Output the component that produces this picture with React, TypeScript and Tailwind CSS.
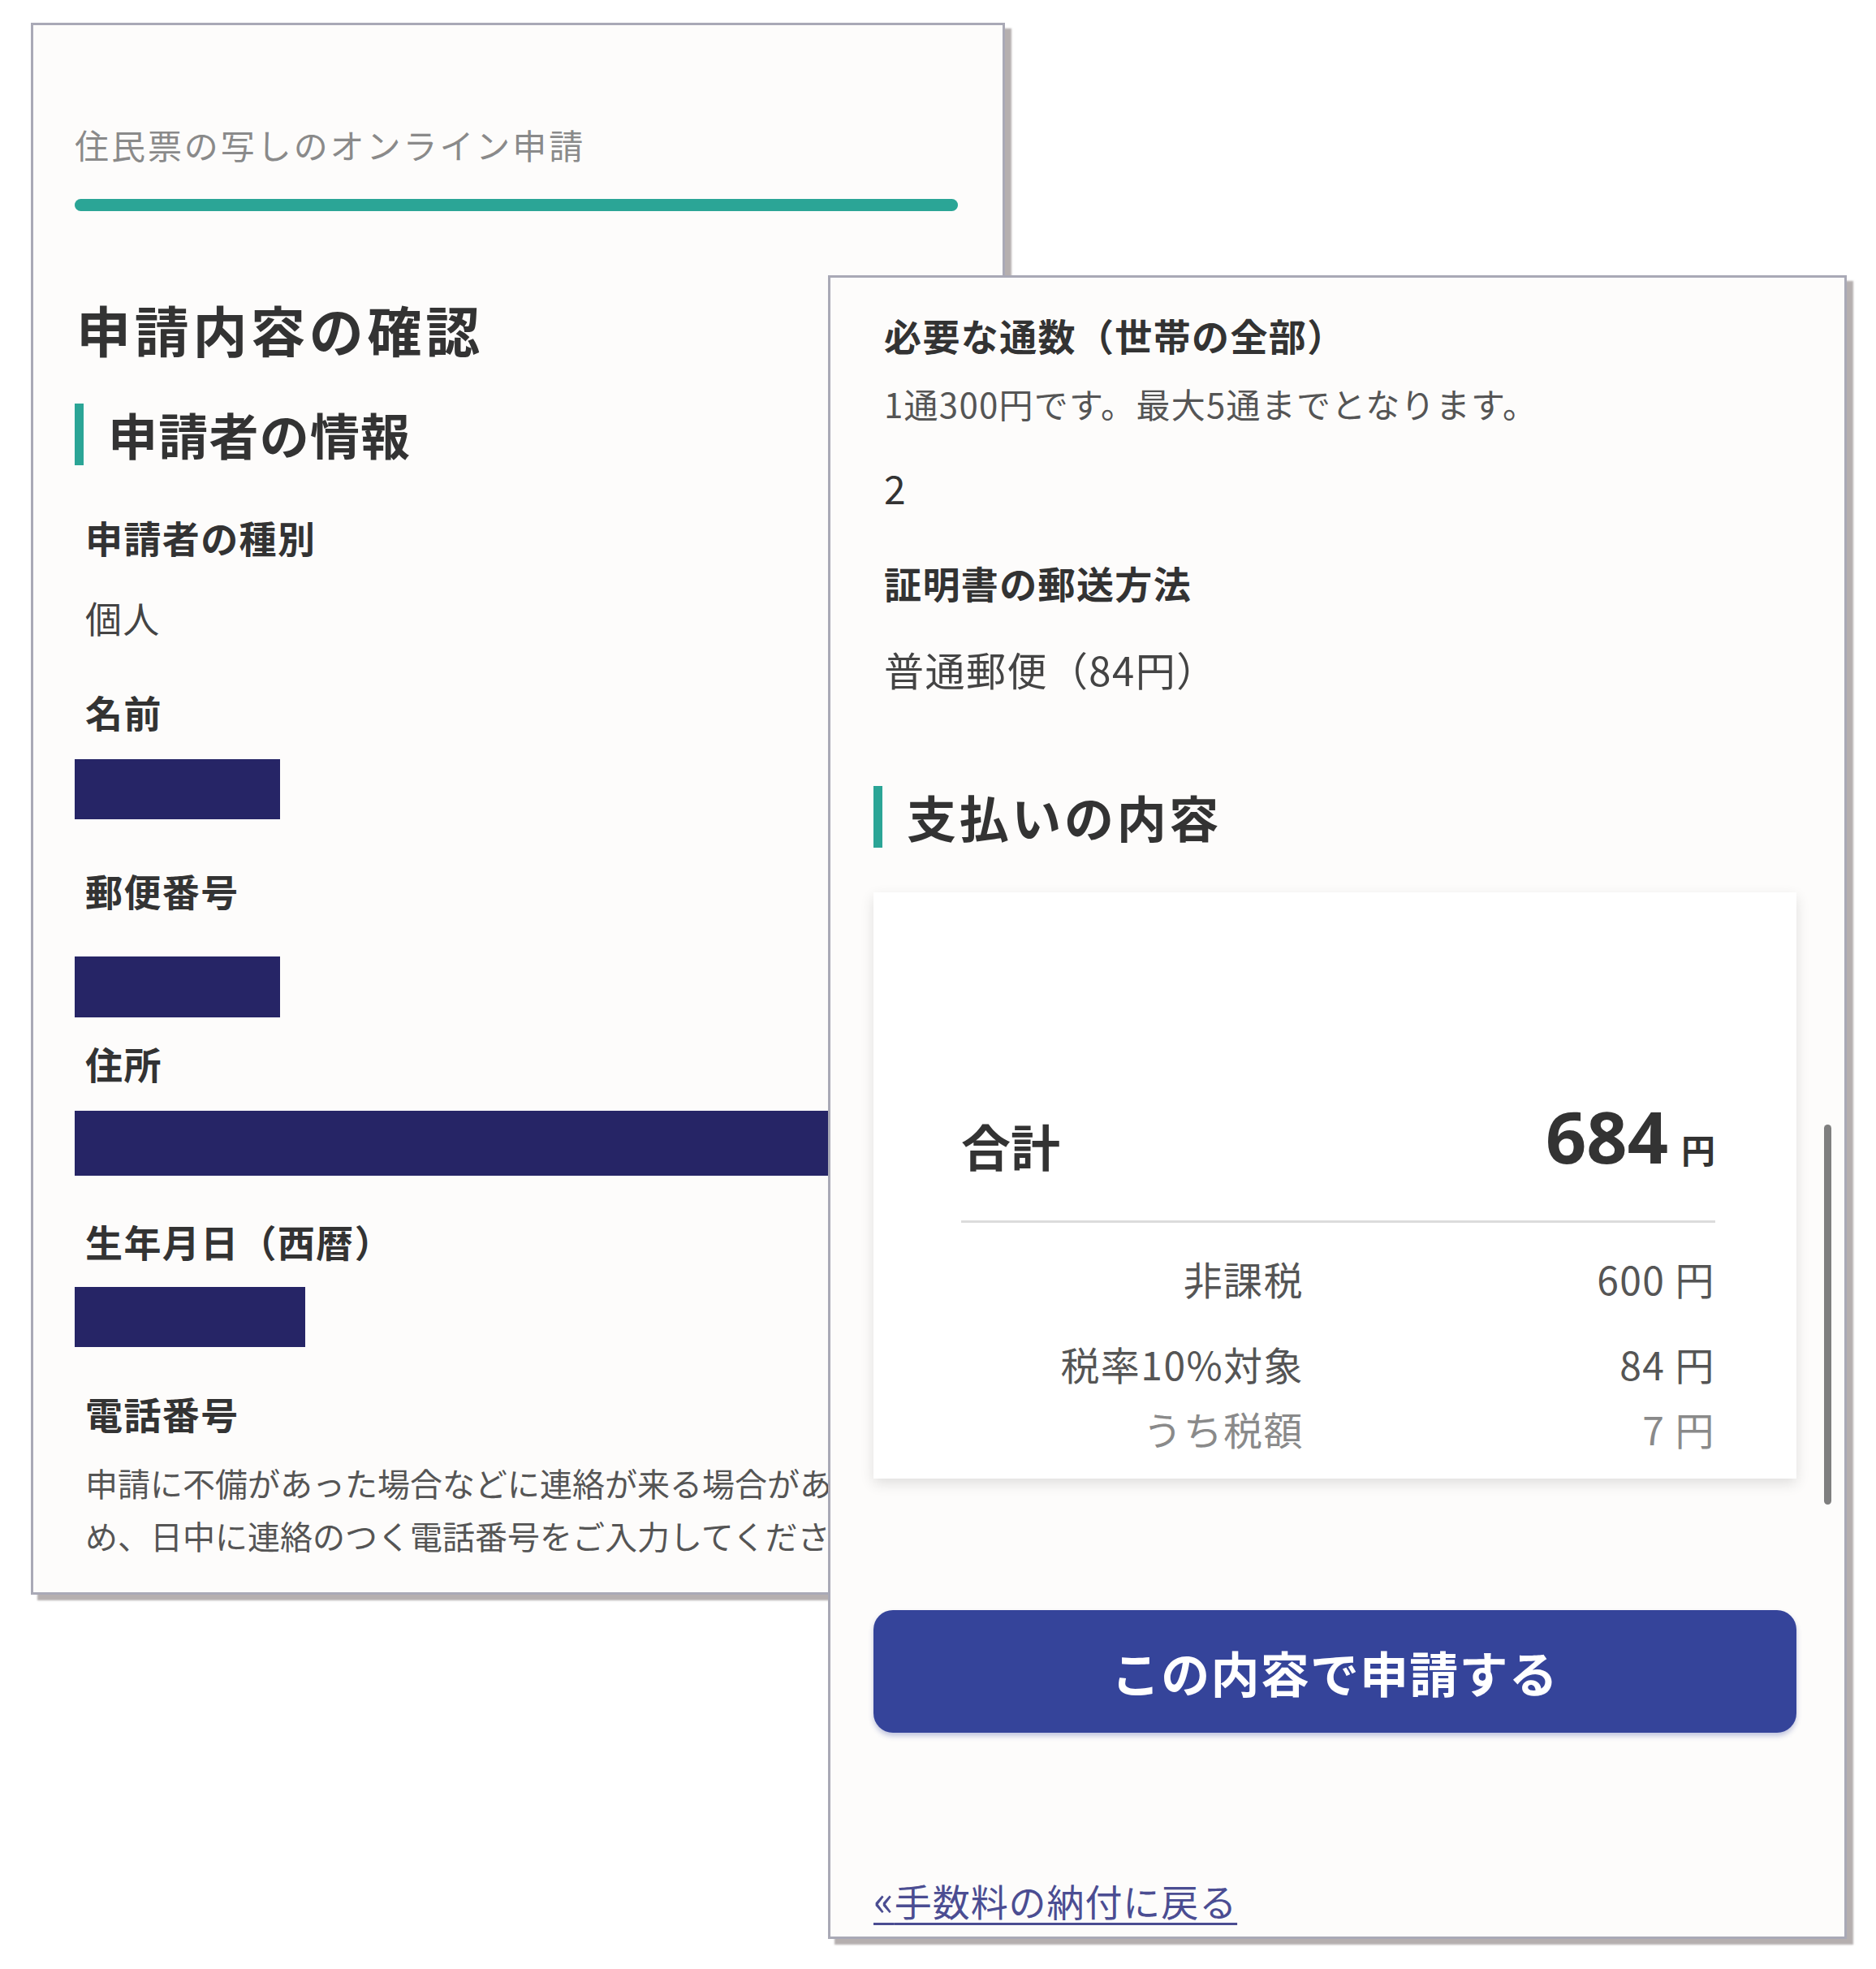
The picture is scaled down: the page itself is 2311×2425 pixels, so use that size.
import React from 'react';

const font = { fontFamily: '"Noto Sans CJK JP", "Noto Sans", sans-serif' };

const Label = ({ children, className = '' }: { children: React.ReactNode; className?: string }) => (
  <div className={`text-[46px] leading-[60px] tracking-[0.03em] font-bold text-[#333] ${className}`}>{children}</div>
);

const Redacted = ({ className = '' }: { className?: string }) => (
  <div className={`bg-[#262566] ${className}`} />
);

const SectionHeading = ({ children, className = '' }: { children: React.ReactNode; className?: string }) => (
  <div className={`flex items-center h-[76px] ${className}`}>
    <div className="w-[11px] h-full bg-[#2ba596]" />
    <div className="ml-[30px] text-[61px] leading-[76px] tracking-[0.02em] font-bold text-[#333]">{children}</div>
  </div>
);

const ApplicantCard = () => (
  <div className="absolute left-[38px] top-[28px] w-[1200px] h-[1936px] border-[3px] border-[#a9a9b6] bg-[#fdfcfb] shadow-[8px_7px_2px_rgba(120,110,110,0.55)] overflow-hidden">
    <div className="flex flex-col pl-[51px] pr-[51px] pt-[117px]">
      <div className="text-[42px] leading-[60px] tracking-[0.07em] text-[#8a8a8a]">住民票の写しのオンライン申請</div>
      <div className="mt-[37px] h-[15px] w-[1088px] rounded-full bg-[#2ba596]" />
      <div className="mt-[100px] ml-[2px] text-[67px] leading-[90px] tracking-[0.07em] font-bold text-[#333]">申請内容の確認</div>
      <SectionHeading className="mt-[47px]">申請者の情報</SectionHeading>

      <Label className="mt-[58px] ml-[13px]">申請者の種別</Label>
      <div className="mt-[40px] ml-[13px] text-[45px] leading-[60px] tracking-[0.03em] text-[#444]">個人</div>

      <Label className="mt-[55px] ml-[13px]">名前</Label>
      <Redacted className="mt-[29px] h-[74px] w-[253px]" />

      <Label className="mt-[57px] ml-[13px]">郵便番号</Label>
      <Redacted className="mt-[52px] h-[75px] w-[253px]" />

      <Label className="mt-[26px] ml-[13px]">住所</Label>
      <Redacted className="mt-[29px] h-[80px] w-full" />

      <Label className="mt-[50px] ml-[13px]">生年月日（西暦）</Label>
      <Redacted className="mt-[27px] h-[74px] w-[284px]" />

      <Label className="mt-[51px] ml-[13px]">電話番号</Label>
      <div className="mt-[24px] ml-[13px] text-[40px] leading-[65px] text-[#555] whitespace-nowrap">
        申請に不備があった場合などに連絡が来る場合があるた
        <br />
        め、日中に連絡のつく電話番号をご入力してください。
      </div>
    </div>
  </div>
);

const PaymentRow = ({ label, value, muted = false, className = '' }: { label: string; value: string; muted?: boolean; className?: string }) => (
  <div className={`grid grid-cols-[422px_1fr] text-[48px] leading-[60px] tracking-[0.03em] ${muted ? 'text-[#8a8a8a]' : 'text-[#555]'} ${className}`}>
    <div className="text-right">{label}</div>
    <div className="text-right">{value}</div>
  </div>
);

const SummaryCard = () => (
  <div className="absolute left-[1020px] top-[339px] w-[1255px] h-[2049px] border-[3px] border-[#a9a9b6] bg-[#fdfcfb] shadow-[8px_7px_2px_rgba(120,110,110,0.55)]">
    <div className="flex flex-col pl-[53px] pr-[59px] pt-[40px]">
      <Label className="ml-[13px]">必要な通数（世帯の全部）</Label>
      <div className="mt-[25px] ml-[13px] text-[42px] leading-[60px] tracking-[0.03em] text-[#555]">1通300円です。最大5通までとなります。</div>
      <div className="mt-[43px] ml-[13px] text-[48px] leading-[60px] text-[#333]">2</div>
      <Label className="mt-[57px] ml-[13px]">証明書の郵送方法</Label>
      <div className="mt-[47px] ml-[13px] text-[49px] leading-[60px] tracking-[0.03em] text-[#444]">普通郵便（84円）</div>

      <SectionHeading className="mt-[114px]">
        <span className="tracking-[0.06em]">支払いの内容</span>
      </SectionHeading>

      <div className="mt-[55px] h-[722px] bg-white shadow-[0_6px_16px_rgba(0,0,0,0.12)] pl-[108px] pr-[100px] pt-[240px]">
        <div className="flex justify-between items-center h-[120px]">
          <div className="mt-[24px] text-[61px] leading-[80px] font-bold text-[#333]">合計</div>
          <div className="flex items-baseline gap-[16px] text-[#333] font-bold">
            <span className="text-[88px] leading-[100px]" style={{ fontFamily: '"Noto Sans", "Noto Sans CJK JP", sans-serif' }}>684</span>
            <span className="text-[42px]">円</span>
          </div>
        </div>
        <div className="mt-[44px] h-[3px] bg-[#dcdcdc]" />
        <PaymentRow className="mt-[38px]" label="非課税" value="600 円" />
        <PaymentRow className="mt-[45px]" label="税率10%対象" value="84 円" />
        <PaymentRow className="mt-[20px]" label="うち税額" value="7 円" muted />
      </div>

      <button className="mt-[162px] h-[151px] w-full rounded-[24px] bg-[#35449a] text-white text-[60px] tracking-[0.02em] font-bold shadow-[0_4px_6px_rgba(53,68,154,0.3)]">
        この内容で申請する
      </button>

      <a href="#" className="mt-[174px] self-start text-[46px] leading-[60px] tracking-[0.02em] text-[#4b4d92] underline underline-offset-[8px] decoration-[3px]">
        <span className="text-[52px]">«</span>手数料の納付に戻る
      </a>
    </div>

    <div className="absolute left-[1224px] top-[1043px] h-[468px] w-[9px] rounded-full bg-[#7f7f7f]" />
  </div>
);

export default function App() {
  return (
    <div className="relative w-[2311px] h-[2425px] bg-white overflow-hidden" style={font}>
      <ApplicantCard />
      <SummaryCard />
    </div>
  );
}
